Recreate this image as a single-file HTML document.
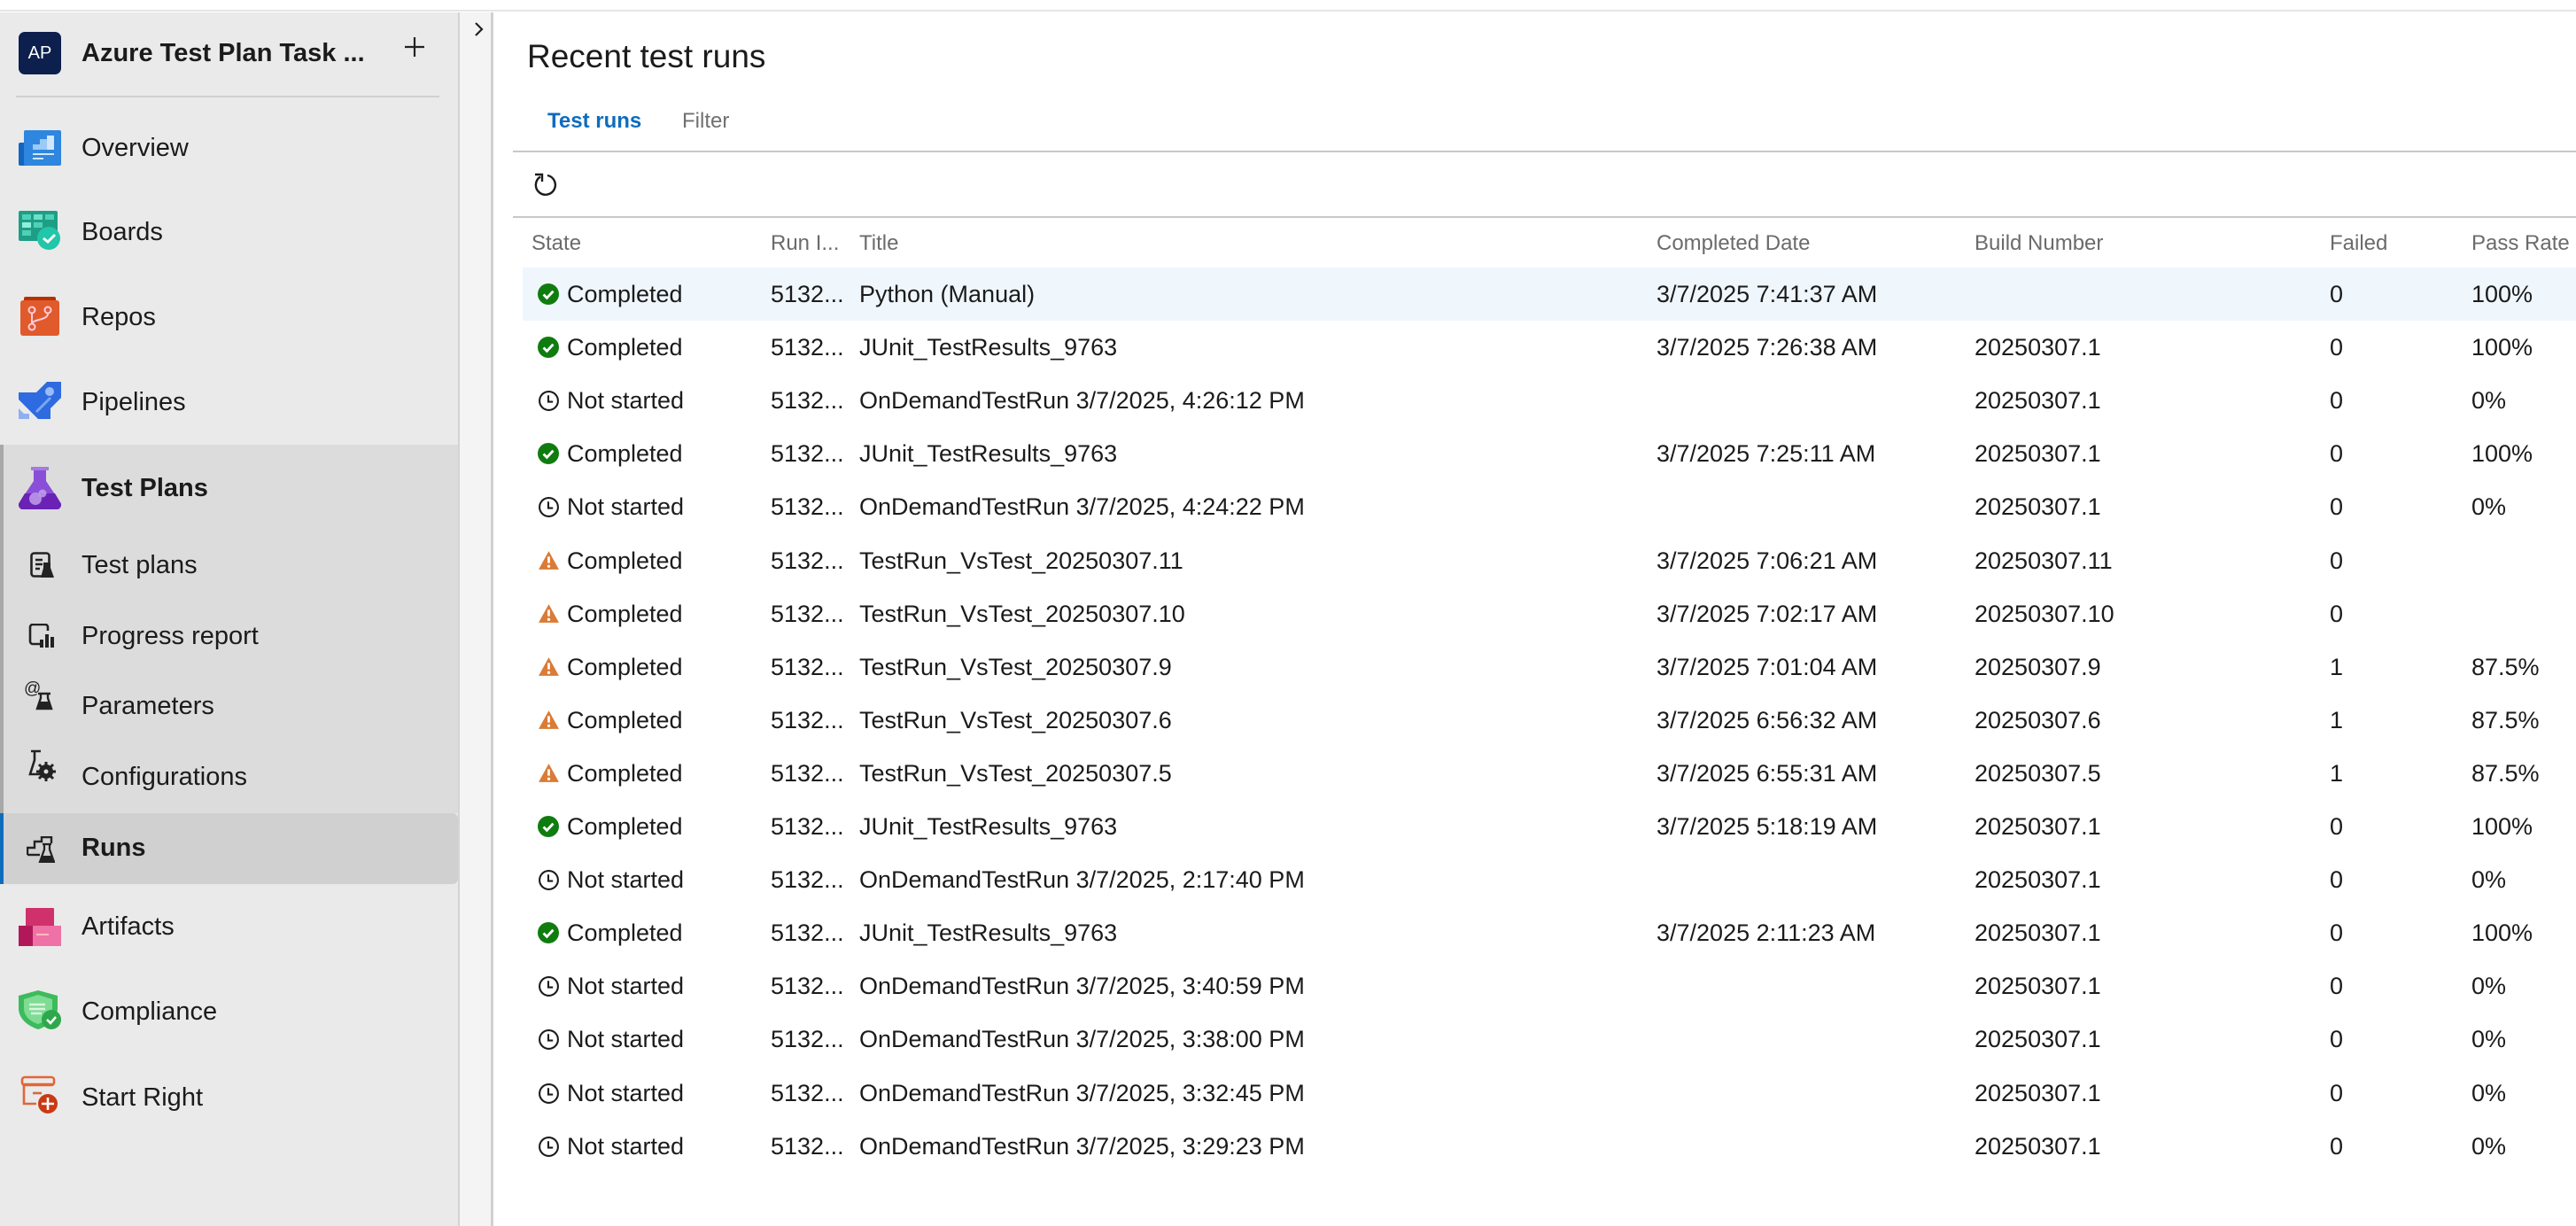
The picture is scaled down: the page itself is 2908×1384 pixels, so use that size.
<!DOCTYPE html>
<html><head><meta charset="utf-8">
<style>
*{margin:0;padding:0;box-sizing:border-box}
html,body{width:2908px;height:1384px;overflow:hidden;background:#fff;font-family:"Liberation Sans",Arial,sans-serif;color:#1b1b1b}
.abs{position:absolute}
#top{left:0;top:0;width:2908px;height:13px;background:#fff;border-bottom:2px solid #e6e6e6}
#side{left:0;top:14px;width:519px;height:1370px;background:#eaeaea;border-right:2px solid #d4d4d4}
#strip{left:519px;top:14px;width:38px;height:1370px;background:#f4f4f4;border-right:3px solid #d0d0d0}
.nav{position:absolute;left:92px;font-size:29px;line-height:40px;white-space:nowrap}
.ic{position:absolute}
.hdr{position:absolute;font-size:24px;color:#6b6b6b;top:260px;line-height:30px;white-space:nowrap}
.row{position:absolute;left:590px;width:2318px;height:60px}
.row span{position:absolute;top:0;line-height:60px;font-size:27px;white-space:nowrap;color:#1b1b1b}
</style></head><body>
<div id="top" class="abs"></div>
<div id="side" class="abs"></div>
<div id="strip" class="abs"></div>
<svg class="abs" style="left:532px;top:22px" width="18" height="22" viewBox="0 0 18 22"><path d="M5 4l7 7-7 7" fill="none" stroke="#222" stroke-width="2.2"/></svg>

<div class="abs" style="left:21px;top:36px;width:48px;height:48px;background:#0c1f4d;border-radius:7px;color:#fff;font-size:20px;line-height:48px;text-align:center">AP</div>
<div class="abs" style="left:92px;top:40px;font-size:29px;font-weight:bold;line-height:40px">Azure Test Plan Task ...</div>
<svg class="abs" style="left:455px;top:40px" width="26" height="26" viewBox="0 0 26 26"><path d="M13 2v22M2 13h22" stroke="#222" stroke-width="2.2"/></svg>
<div class="abs" style="left:18px;top:108px;width:478px;height:2px;background:#d0d0d0"></div>

<div class="abs" style="left:0;top:502px;width:517px;height:416px;background:#dcdcdc;border-left:4px solid #a8a8a8"></div>
<div class="abs" style="left:0;top:918px;width:517px;height:80px;background:#d0d0d0;border-left:4px solid #0f6cbd;border-radius:0 6px 6px 0"></div>

<svg class="ic" style="left:21px;top:147px" width="48" height="40" viewBox="0 0 48 40"><rect x="0" y="14" width="14" height="26" rx="2" fill="#1565c0"/><rect x="6" y="0" width="42" height="40" rx="2" fill="#2e86de"/><rect x="16" y="16" width="8" height="6" fill="#9cc9f5"/><rect x="24" y="10" width="8" height="12" fill="#9cc9f5"/><rect x="32" y="6" width="8" height="16" fill="#cfe6fb"/><rect x="16" y="26" width="24" height="2" fill="#cfe6fb"/><rect x="16" y="31" width="12" height="2" fill="#cfe6fb"/></svg>
<div class="nav" style="top:147px">Overview</div>

<svg class="ic" style="left:21px;top:238px" width="48" height="44" viewBox="0 0 48 44"><rect x="0" y="0" width="44" height="34" rx="2" fill="#1f9e86"/><rect x="4" y="4" width="10" height="6" fill="#4fd1b8"/><rect x="17" y="4" width="10" height="6" fill="#6fe0c8"/><rect x="30" y="4" width="10" height="6" fill="#4fd1b8"/><rect x="4" y="13" width="10" height="6" fill="#8ff0dc"/><rect x="17" y="13" width="10" height="6" fill="#4fd1b8"/><rect x="4" y="22" width="10" height="6" fill="#4fd1b8"/><circle cx="34" cy="31" r="13" fill="#22c6a8"/><path d="M28 31l5 4 8-8" stroke="#fff" stroke-width="3" fill="none"/></svg>
<div class="nav" style="top:242px">Boards</div>

<svg class="ic" style="left:23px;top:335px" width="45" height="44" viewBox="0 0 45 44"><rect x="4" y="0" width="36" height="10" rx="2" fill="#b83000"/><rect x="0" y="4" width="44" height="40" rx="3" fill="#e05a2c"/><circle cx="13" cy="15" r="3.5" fill="none" stroke="#fcd" stroke-width="2"/><circle cx="31" cy="15" r="3.5" fill="none" stroke="#fcd" stroke-width="2"/><circle cx="13" cy="34" r="3.5" fill="none" stroke="#fcd" stroke-width="2"/><path d="M13 19v11M31 19c0 8-18 6-18 12" stroke="#fcd" stroke-width="2" fill="none"/></svg>
<div class="nav" style="top:338px">Repos</div>

<svg class="ic" style="left:21px;top:431px" width="48" height="42" viewBox="0 0 48 42"><path d="M0 12h20l12-12h16v18L36 30v12H22L0 20z" fill="#2f6be0"/><path d="M20 34L36 18" stroke="#7aa6f3" stroke-width="3"/><circle cx="35" cy="11" r="5" fill="#9cbcf7"/><path d="M0 42V30l6 6h6v6z" fill="#8fb0f0"/></svg>
<div class="nav" style="top:434px">Pipelines</div>

<svg class="ic" style="left:21px;top:527px" width="48" height="48" viewBox="0 0 48 48"><rect x="14" y="0" width="20" height="4" fill="#a67be0"/><path d="M17 4h14v12l16 24a5 5 0 0 1-4 8H5a5 5 0 0 1-4-8l16-24z" fill="#8a4fd8"/><path d="M1 40l6-10h34l6 10a5 5 0 0 1-4 8H5a5 5 0 0 1-4-8z" fill="#6a22b4"/><circle cx="19" cy="36" r="7" fill="#c6a6f0" opacity=".8"/><circle cx="27" cy="30" r="4.5" fill="#c6a6f0" opacity=".8"/></svg>
<div class="nav" style="top:531px;font-weight:bold">Test Plans</div>

<svg class="ic" style="left:34px;top:623px" width="28" height="30" viewBox="0 0 28 30"><rect x="1.5" y="1.5" width="20" height="26" rx="3" fill="none" stroke="#222" stroke-width="2.6"/><path d="M6 9h8M6 14h8M6 19h5" stroke="#222" stroke-width="2.4"/><path d="M15 12h8v6l4 11H12l3-11z" fill="#222"/></svg>
<div class="nav" style="top:618px">Test plans</div>

<svg class="ic" style="left:32px;top:704px" width="30" height="28" viewBox="0 0 30 28"><path d="M22 8V4a3 3 0 0 0-3-3H5a3 3 0 0 0-3 3v16a3 3 0 0 0 3 3h8" fill="none" stroke="#222" stroke-width="2.6"/><rect x="13" y="18" width="4" height="9" fill="#222"/><rect x="19" y="12" width="4" height="15" fill="#222"/><rect x="25" y="15" width="4" height="12" fill="#222"/></svg>
<div class="nav" style="top:698px">Progress report</div>

<svg class="ic" style="left:27px;top:766px" width="36" height="36" viewBox="0 0 36 36"><text x="0" y="17" font-family="Liberation Sans" font-size="19" fill="#222">@</text><path d="M16 17h14M19 17v5l-4 12h16l-4-12v-5" fill="none" stroke="#222" stroke-width="2.4"/><path d="M17 26h12l3 8H14z" fill="#222"/></svg>
<div class="nav" style="top:777px">Parameters</div>

<svg class="ic" style="left:31px;top:846px" width="32" height="36" viewBox="0 0 32 36"><path d="M4 2h11M8 2v10L3 28h12" fill="none" stroke="#222" stroke-width="2.6"/><circle cx="21" cy="25" r="8" fill="#222"/><path d="M21 14v22M10 25h22M13 17l16 16M29 17L13 33" stroke="#222" stroke-width="3"/><circle cx="21" cy="25" r="2.5" fill="#dcdcdc"/></svg>
<div class="nav" style="top:857px">Configurations</div>

<svg class="ic" style="left:30px;top:944px" width="32" height="30" viewBox="0 0 32 30"><path d="M1 21V13h8V6h8V1h11v7" fill="none" stroke="#222" stroke-width="2.4"/><path d="M1 21h14" stroke="#222" stroke-width="2.4"/><path d="M18 9h10M20 9v6l-5 14h16l-5-14v-6" fill="none" stroke="#222" stroke-width="2.2"/><path d="M17 22h12l2 7H15z" fill="#222"/></svg>
<div class="nav" style="top:937px;font-weight:bold">Runs</div>

<svg class="ic" style="left:21px;top:1025px" width="48" height="43" viewBox="0 0 48 43"><rect x="8" y="0" width="32" height="22" rx="1" fill="#d0306b"/><rect x="0" y="20" width="18" height="23" fill="#b0185a"/><rect x="16" y="20" width="32" height="23" fill="#ee72a6"/><rect x="20" y="29" width="14" height="2" fill="#fbb"/></svg>
<div class="nav" style="top:1026px">Artifacts</div>

<svg class="ic" style="left:21px;top:1118px" width="48" height="44" viewBox="0 0 48 44"><path d="M22 0l22 6v14c0 12-10 20-22 24C10 40 0 32 0 20V6z" fill="#3dbb5c"/><path d="M22 5l16 5v10c0 9-7 15-16 18C13 35 6 29 6 20V10z" fill="#7fdc93"/><path d="M12 16h18M12 21h18M14 26h12" stroke="#d8f5de" stroke-width="2.5"/><circle cx="37" cy="33" r="11" fill="#2ea84c"/><path d="M32 33l4 4 6-7" stroke="#fff" stroke-width="2.6" fill="none"/></svg>
<div class="nav" style="top:1122px">Compliance</div>

<svg class="ic" style="left:23px;top:1214px" width="44" height="44" viewBox="0 0 44 44"><path d="M2 10h36M4 10v22h14" fill="none" stroke="#e0663a" stroke-width="2.6"/><rect x="2" y="2" width="36" height="9" rx="3" fill="none" stroke="#e0663a" stroke-width="2.6"/><path d="M14 20h10" stroke="#e0663a" stroke-width="2.6"/><circle cx="31" cy="32" r="11" fill="#c83a14"/><path d="M31 25v14M24 32h14" stroke="#fff" stroke-width="2.6"/></svg>
<div class="nav" style="top:1219px">Start Right</div>

<div class="abs" style="left:595px;top:42px;font-size:37px;line-height:44px">Recent test runs</div>
<div class="abs" style="left:618px;top:122px;font-size:24px;font-weight:bold;color:#0f6cbd;line-height:30px">Test runs</div>
<div class="abs" style="left:770px;top:122px;font-size:24px;color:#707070;line-height:30px">Filter</div>
<div class="abs" style="left:579px;top:170px;width:2329px;height:2px;background:#c8c8c8"></div>
<svg class="abs" style="left:601px;top:193px" width="28" height="30" viewBox="0 0 28 30"><path d="M9 6.5A11 11 0 1 0 17 5" fill="none" stroke="#1b1b1b" stroke-width="2.4"/><path d="M3 4h8v8" fill="none" stroke="#1b1b1b" stroke-width="2.4"/></svg>
<div class="abs" style="left:579px;top:244px;width:2329px;height:2px;background:#c8c8c8"></div>

<div class="hdr" style="left:600px">State</div>
<div class="hdr" style="left:870px">Run I...</div>
<div class="hdr" style="left:970px">Title</div>
<div class="hdr" style="left:1870px">Completed Date</div>
<div class="hdr" style="left:2229px">Build Number</div>
<div class="hdr" style="left:2630px">Failed</div>
<div class="hdr" style="left:2790px">Pass Rate</div>

<div id="rows"></div>
<script>
var ok='<svg width="24" height="24" viewBox="0 0 22 22"><circle cx="11" cy="11" r="11" fill="#107c10"/><path d="M6 11.5l3.5 3.5 6.5-7" stroke="#fff" stroke-width="2.6" fill="none"/></svg>';
var clk='<svg width="25" height="25" viewBox="0 0 24 24"><circle cx="12" cy="12" r="10" fill="none" stroke="#1b1b1b" stroke-width="2"/><path d="M11.5 6v7h5" fill="none" stroke="#1b1b1b" stroke-width="2"/></svg>';
var warn='<svg width="25" height="23" viewBox="0 0 24 22"><path d="M12 1L23 21H1z" fill="#da7b36"/><path d="M12 7v7" stroke="#fff" stroke-width="2.6"/><circle cx="12" cy="17.5" r="1.6" fill="#fff"/></svg>';
var R=[
[ok,'Completed','Python (Manual)','3/7/2025 7:41:37 AM','','0','100%'],
[ok,'Completed','JUnit_TestResults_9763','3/7/2025 7:26:38 AM','20250307.1','0','100%'],
[clk,'Not started','OnDemandTestRun 3/7/2025, 4:26:12 PM','','20250307.1','0','0%'],
[ok,'Completed','JUnit_TestResults_9763','3/7/2025 7:25:11 AM','20250307.1','0','100%'],
[clk,'Not started','OnDemandTestRun 3/7/2025, 4:24:22 PM','','20250307.1','0','0%'],
[warn,'Completed','TestRun_VsTest_20250307.11','3/7/2025 7:06:21 AM','20250307.11','0',''],
[warn,'Completed','TestRun_VsTest_20250307.10','3/7/2025 7:02:17 AM','20250307.10','0',''],
[warn,'Completed','TestRun_VsTest_20250307.9','3/7/2025 7:01:04 AM','20250307.9','1','87.5%'],
[warn,'Completed','TestRun_VsTest_20250307.6','3/7/2025 6:56:32 AM','20250307.6','1','87.5%'],
[warn,'Completed','TestRun_VsTest_20250307.5','3/7/2025 6:55:31 AM','20250307.5','1','87.5%'],
[ok,'Completed','JUnit_TestResults_9763','3/7/2025 5:18:19 AM','20250307.1','0','100%'],
[clk,'Not started','OnDemandTestRun 3/7/2025, 2:17:40 PM','','20250307.1','0','0%'],
[ok,'Completed','JUnit_TestResults_9763','3/7/2025 2:11:23 AM','20250307.1','0','100%'],
[clk,'Not started','OnDemandTestRun 3/7/2025, 3:40:59 PM','','20250307.1','0','0%'],
[clk,'Not started','OnDemandTestRun 3/7/2025, 3:38:00 PM','','20250307.1','0','0%'],
[clk,'Not started','OnDemandTestRun 3/7/2025, 3:32:45 PM','','20250307.1','0','0%'],
[clk,'Not started','OnDemandTestRun 3/7/2025, 3:29:23 PM','','20250307.1','0','0%']];
var h='';
R.forEach(function(r,i){
 var top=Math.round(302+i*60.1);
 h+='<div class="row" style="top:'+top+'px;'+(i==0?'background:#eff6fc;':'')+'">'+
 '<span style="left:17px;top:18px;line-height:0">'+r[0]+'</span>'+
 '<span style="left:50px">'+r[1]+'</span>'+
 '<span style="left:280px">5132...</span>'+
 '<span style="left:380px">'+r[2]+'</span>'+
 '<span style="left:1280px">'+r[3]+'</span>'+
 '<span style="left:1639px">'+r[4]+'</span>'+
 '<span style="left:2040px">'+r[5]+'</span>'+
 '<span style="left:2200px">'+r[6]+'</span></div>';
});
document.getElementById('rows').innerHTML=h;
</script>
</body></html>
